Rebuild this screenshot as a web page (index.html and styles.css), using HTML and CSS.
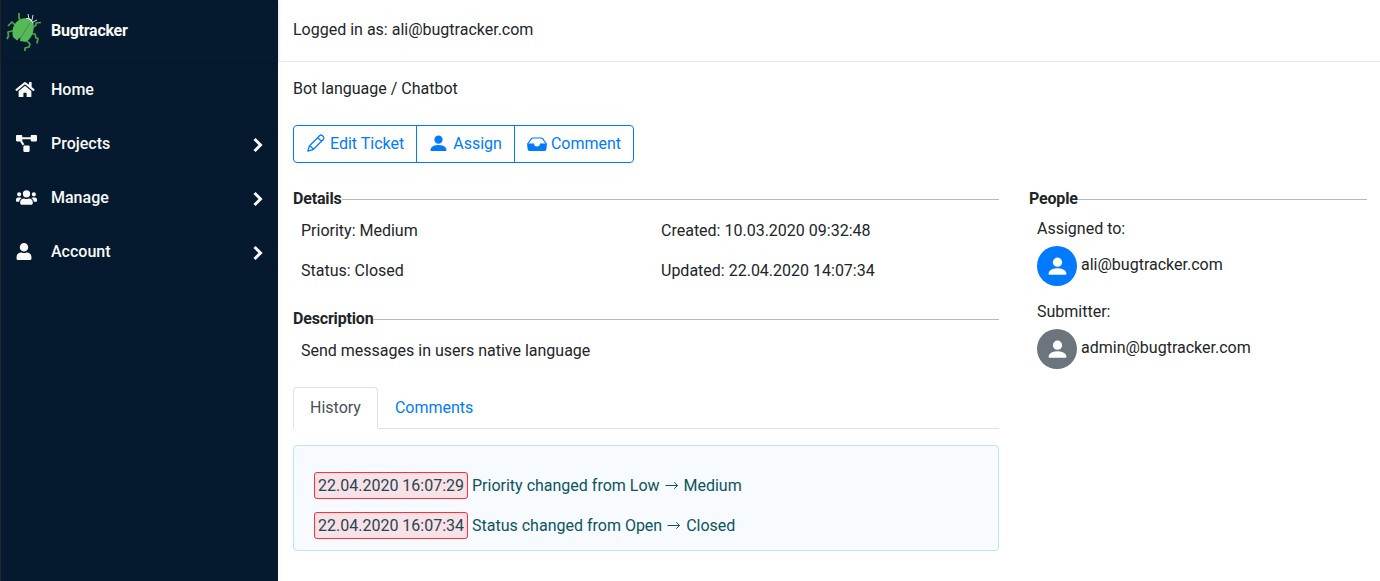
FILE: index.html
```html
<!DOCTYPE html>
<html lang="en">
<head>
<meta charset="utf-8">
<title>Bugtracker</title>
<link rel="stylesheet" href="styles.css">
</head>
<body>
<svg class="defs" width="0" height="0">
  <symbol id="person" viewBox="0 0 16 16"><path d="M1.500 15s-1 0-1-1 1-4.500 7.500-4.500 7.500 3.500 7.500 4.500-1 1-1 1z"/><circle cx="8" cy="4.400" r="3.900"/></symbol>
  <symbol id="chevron" viewBox="0 0 10 16"><path d="M1.500 2l6 6-6 6" fill="none" stroke="currentColor" stroke-width="3"/></symbol>
  <symbol id="arrow" viewBox="0 0 16 16"><path d="M1.500 7.500h12M10.300 4.300l3.200 3.200-3.200 3.200" fill="none" stroke="currentColor" stroke-width="1"/></symbol>
</svg>
<div class="app">
  <nav class="sidebar">
    <div class="brand">
      <svg class="bug" viewBox="0 0 36 40">
        <g fill="none" stroke="#45a84a" stroke-width="1.700" stroke-linejoin="round">
          <path d="M15 10l-2-3v-5M9 14l-3-3-4 4M8 19.500l-6 1.500.500 4-1.500 3M26 17l4-3v-2l5-.500M25 23h4l1 4 2 .500-1 5M21 30l3 3-1 3-4 1 0 3"/>
        </g>
        <path d="M18.500 8.500c2-3.500 9-1 9 5.500z" fill="#fff"/><path d="M23 8l-1-5M26 9l1-5M27 11l4-2" stroke="#d7dde2" fill="none"/>
        <path d="M17 7.500c5-1 10 3 10.500 7 1 7-3 14-7.500 16.500L14 30l.500-4-3.500 3.500-4-3.500C5 17 9 9 17 7.500z" fill="#56b957"/>
        <path d="M24 12L14.500 27" stroke="#2f8a40" stroke-width=".800"/>
      </svg>
      <span>Bugtracker</span>
    </div>
    <a class="item"><svg class="ico" viewBox="0 0 576 512"><path d="M280 148L96 300v164a16 16 0 0 0 16 16h112a16 16 0 0 0 16-16v-96a16 16 0 0 1 16-16h64a16 16 0 0 1 16 16v96a16 16 0 0 0 16 16h112a16 16 0 0 0 16-16V300L296 148a12 12 0 0 0-16 0zM572 251l-84-69V44a12 12 0 0 0-12-12h-56a12 12 0 0 0-12 12v72l-90-74a48 48 0 0 0-61 0L4 251a12 12 0 0 0-1 17l26 31a12 12 0 0 0 17 2l235-194a12 12 0 0 1 15 0l235 194a12 12 0 0 0 17-2l26-31a12 12 0 0 0-2-17z"/></svg><span>Home</span></a>
    <a class="item"><svg class="ico wide" viewBox="0 0 640 512"><path d="M384 320H256c-18 0-32 14-32 32v128c0 18 14 32 32 32h128c18 0 32-14 32-32V352c0-18-14-32-32-32zM192 32c0-18-14-32-32-32H32C14 0 0 14 0 32v128c0 18 14 32 32 32h95l73 128c11-19 32-32 56-32h.300L192 176v-48h256V64H192zM608 0H480c-18 0-32 14-32 32v128c0 18 14 32 32 32h128c18 0 32-14 32-32V32c0-18-14-32-32-32z"/></svg><span>Projects</span><svg class="chev"><use href="#chevron"/></svg></a>
    <a class="item"><svg class="ico wide" viewBox="0 0 640 512"><path d="M96 224a64 64 0 1 0 0-128 64 64 0 0 0 0 128zm448 0a64 64 0 1 0 0-128 64 64 0 0 0 0 128zm32 32h-64c-18 0-34 7-45 18 40 22 69 62 75 110h66c18 0 32-14 32-32v-32c0-35-29-64-64-64zm-256 0a112 112 0 1 0 0-224 112 112 0 0 0 0 224zm77 32h-8a155 155 0 0 1-138 0h-8c-64 0-115 51-115 115v29c0 27 21 48 48 48h288c27 0 48-21 48-48v-29c0-64-51-115-115-115zm-224-14c-11-11-27-18-45-18H64c-35 0-64 29-64 64v32c0 18 14 32 32 32h66c6-48 35-88 75-110z"/></svg><span>Manage</span><svg class="chev"><use href="#chevron"/></svg></a>
    <a class="item"><svg class="ico user" viewBox="0 0 448 512"><path d="M224 256a128 128 0 1 0 0-256 128 128 0 0 0 0 256zm90 32h-17a174 174 0 0 1-146 0h-17C60 288 0 348 0 422v42c0 27 21 48 48 48h352c27 0 48-21 48-48v-42c0-74-60-134-134-134z"/></svg><span>Account</span><svg class="chev"><use href="#chevron"/></svg></a>
  </nav>
  <div class="page">
    <header class="top">Logged in as: ali@bugtracker.com</header>
    <main class="main">
      <div class="crumb">Bot language / Chatbot</div>
      <div class="buttons">
        <a class="btn edit"><svg viewBox="0 0 20 20"><path d="M1.800 18.200l1.500-5.200L13.800 2.500q1.200-1 2.400 0l1.300 1.300q1 1.200 0 2.400L7 16.700zM11.700 4.600l3.700 3.700M3.300 13l1.700.500.500 1 1 .500.500 1.700" fill="none" stroke="currentColor" stroke-width="1.250" stroke-linejoin="round"/></svg>Edit Ticket</a>
        <a class="btn assign"><svg viewBox="0 0 16 16"><use href="#person"/></svg>Assign</a>
        <a class="btn comment"><svg viewBox="0 0 20 16"><path d="M.700 8L4.500 2.500Q5 2 6 2h8q1 0 1.500.500L19.300 8" fill="none" stroke="currentColor" stroke-width="1.200"/><path d="M0 7.500h7a3 3 0 0 0 6 0h7l-.600 5.500q-.200 2-2 2H2.600q-1.800 0-2-2z"/></svg>Comment</a>
      </div>
      <div class="columns">
        <div class="left">
          <h2 class="title">Details</h2>
          <div class="facts"><span>Priority: Medium</span><span>Created: 10.03.2020 09:32:48</span><span>Status: Closed</span><span>Updated: 22.04.2020 14:07:34</span></div>
          <h2 class="title">Description</h2>
          <p class="desc">Send messages in users native language</p>
          <div class="tabs"><a class="tab active">History</a><a class="tab">Comments</a></div>
          <div class="history">
            <p><span class="stamp">22.04.2020 16:07:29</span> Priority changed from Low <svg class="arrow"><use href="#arrow"/></svg> Medium</p>
            <p><span class="stamp">22.04.2020 16:07:34</span> Status changed from Open <svg class="arrow"><use href="#arrow"/></svg> Closed</p>
          </div>
        </div>
        <aside class="right">
          <h2 class="title">People</h2>
          <div class="label">Assigned to:</div>
          <div class="who"><i class="avatar"><svg><use href="#person"/></svg></i><span>ali@bugtracker.com</span></div>
          <div class="label">Submitter:</div>
          <div class="who"><i class="avatar grey"><svg><use href="#person"/></svg></i><span>admin@bugtracker.com</span></div>
        </aside>
      </div>
    </main>
  </div>
</div>
</body>
</html>
```
FILE: styles.css
```css
* { box-sizing: border-box; }
body { margin: 0; font: 400 16px/24px Roboto, sans-serif; color: #212529; background: #fff; overflow: hidden; }
svg { fill: currentColor; flex: none; }
.defs { position: absolute; }
.app { display: flex; height: 581px; }
.sidebar { width: 278px; flex: none; background: #051a2e; color: #f8f9fa; border-left: 1px solid #24272b; }
.brand { display: flex; align-items: center; height: 62px; padding-left: 5px; font-weight: 700; letter-spacing: -.25px; box-shadow: 0 1px 3px rgba(0,0,0,.2); }
.bug { width: 36px; height: 40px; margin-right: 9px; }
.item { display: flex; align-items: center; height: 54px; padding: 0 15px 0 14px; font-weight: 500; }
.item span { padding-top: 2px; }
.ico { width: 20px; height: 17px; margin-right: 16px; }
.ico.wide { width: 21px; height: 17px; margin: 0 14px 0 1px; }
.ico.user { width: 16px; margin: 0 19px 0 1px; }
.chev { width: 10px; height: 16px; margin: 3px 0 0 auto; }
.page { flex: 1; }
.top { height: 62px; padding: 18px 15px; border-bottom: 1px solid #e9e9e9; }
.main { padding: 15px 13px 0 15px; }
.crumb { height: 48px; }
.buttons { display: inline-flex; height: 38px; border: 1px solid #007bff; border-radius: 4px; color: #007bff; }
.btn { display: flex; padding: 6px 12px; }
.btn + .btn { border-left: 1px solid #007bff; }
.btn svg { width: 20px; height: 20px; margin: 1px 4px 0 0; }
.btn.assign svg { width: 17px; height: 17px; margin: 3px 6px 0 1px; }
.btn.comment svg { height: 16px; margin-top: 4px; }
.columns { display: flex; gap: 30px; margin-top: 24px; }
.left { width: 706px; }
.right { flex: 1; }
.title { display: flex; align-items: center; margin: 0; height: 24px; font: 700 16px/24px Roboto, sans-serif; letter-spacing: -.17px; }
.title::after { content: ""; flex: 1; height: 1px; background: #bababa; margin-top: 1px; }
.facts { display: grid; grid-template-columns: 360px 1fr; row-gap: 16px; padding: 8px 8px 24px; }
.desc { margin: 0; padding: 8px 8px 24px; }
.tabs { display: flex; height: 42px; border-bottom: 1px solid #dee2e6; color: #007bff; }
.tab { height: 42px; padding: 9px 17px; }
.tab.active { padding: 8px 16px; border: 1px solid #dee2e6; border-bottom-color: #fff; border-radius: 4px 4px 0 0; color: #495057; }
.history { height: 106px; margin-top: 16px; padding: 28px 20px 0; background: #f7faff; border: 1px solid #bee5eb; border-radius: 4px; color: #0c5460; }
.history p { margin: 0 0 16px; }
.stamp { padding: 3px; background: #f8e1e7; border: 1px solid #ff3038; border-radius: 3px; color: #27464f; }
.arrow { width: 16px; height: 16px; vertical-align: -3px; }
.label { padding-left: 8px; margin-top: 6px; }
.who { display: flex; padding: 5px 0 8px 8px; line-height: 38px; }
.avatar { display: flex; align-items: center; justify-content: center; width: 40px; height: 40px; margin-right: 4px; border-radius: 50%; background: #007bff; color: #fff; }
.avatar.grey { background: #6c757d; }
.avatar svg { width: 19px; height: 19px; }
```
